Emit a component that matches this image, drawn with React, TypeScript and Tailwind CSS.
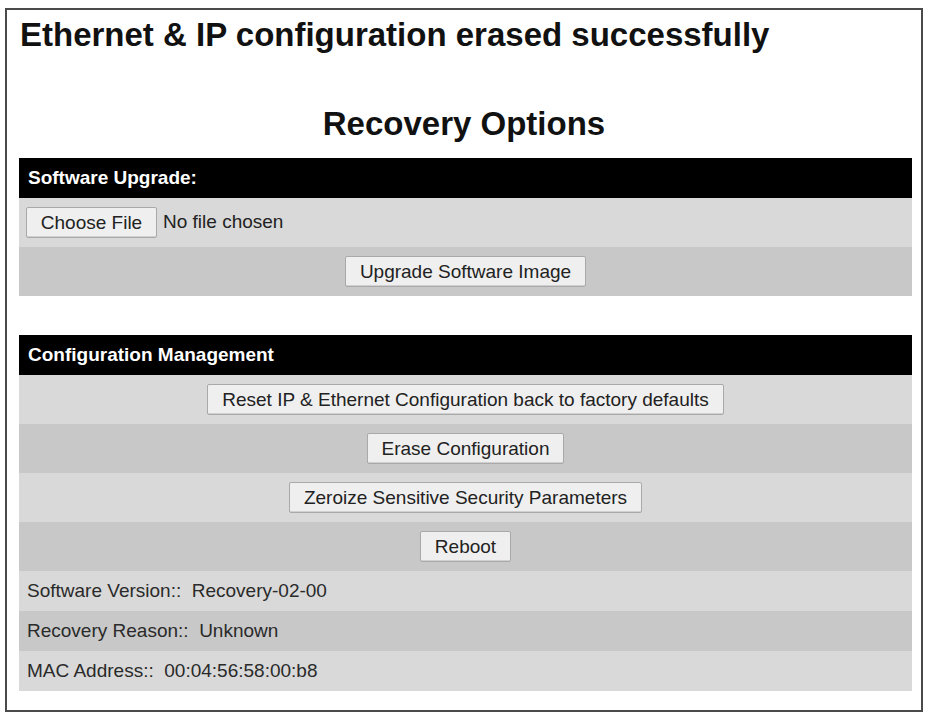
import React from "react";

const font = { fontFamily: '"Liberation Sans", Arial, sans-serif' };

function Btn({ children, className = "" }: { children: React.ReactNode; className?: string }) {
  return (
    <button
      className={
        "h-[31px] bg-[#efefef] border border-[#a9a9a9] rounded-[2px] text-[19px] leading-[29px] text-[#222] shadow-[inset_0_-1px_0_#d0d0d0] " +
        className
      }
    >
      {children}
    </button>
  );
}

function Header({ children }: { children: React.ReactNode }) {
  return (
    <div className="h-[40px] bg-black text-white font-bold text-[19px] flex items-center pl-[9px]">
      {children}
    </div>
  );
}

function BtnRow({ children, dark }: { children: React.ReactNode; dark?: boolean }) {
  return (
    <div className={"h-[49px] flex items-center justify-center " + (dark ? "bg-[#c8c8c8]" : "bg-[#d9d9d9]")}>
      {children}
    </div>
  );
}

function InfoRow({ label, value, dark }: { label: string; value: string; dark?: boolean }) {
  return (
    <div
      className={
        "h-[40px] flex items-center pl-[8px] text-[19px] text-[#2a2a2a] whitespace-pre " +
        (dark ? "bg-[#c8c8c8]" : "bg-[#d9d9d9]")
      }
    >
      {label + "::\u00a0\u00a0" + value}
    </div>
  );
}

export default function App() {
  return (
    <div className="w-[926px] h-[712px] bg-white pt-[8px] pl-[5px] overflow-hidden" style={font}>
      <div className="w-[918px] h-[704px] border-2 border-[#4a4a4a] flex flex-col">
        <h1 className="pl-[13px] pt-[6px] text-[33px] leading-[37px] font-bold text-[#111]">
          Ethernet &amp; IP configuration erased successfully
        </h1>
        <h2 className="mt-[52px] text-center text-[33px] leading-[38px] font-bold text-[#111]">
          Recovery Options
        </h2>
        <div className="mt-[15px] ml-[12px] mr-[9px]">
          <Header>Software Upgrade:</Header>
          <div className="h-[49px] bg-[#d9d9d9] flex items-center pl-[7px]">
            <Btn className="w-[131px]">Choose File</Btn>
            <span className="ml-[6px] text-[19px] text-[#222]">No file chosen</span>
          </div>
          <BtnRow dark>
            <Btn className="px-[14px]">Upgrade Software Image</Btn>
          </BtnRow>
        </div>
        <div className="mt-[39px] ml-[12px] mr-[9px]">
          <Header>Configuration Management</Header>
          <BtnRow>
            <Btn className="px-[14px]">Reset IP &amp; Ethernet Configuration back to factory defaults</Btn>
          </BtnRow>
          <BtnRow dark>
            <Btn className="px-[14px]">Erase Configuration</Btn>
          </BtnRow>
          <BtnRow>
            <Btn className="px-[14px]">Zeroize Sensitive Security Parameters</Btn>
          </BtnRow>
          <BtnRow dark>
            <Btn className="px-[14px]">Reboot</Btn>
          </BtnRow>
          <InfoRow label="Software Version" value="Recovery-02-00" />
          <InfoRow label="Recovery Reason" value="Unknown" dark />
          <InfoRow label="MAC Address" value="00:04:56:58:00:b8" />
        </div>
      </div>
    </div>
  );
}
